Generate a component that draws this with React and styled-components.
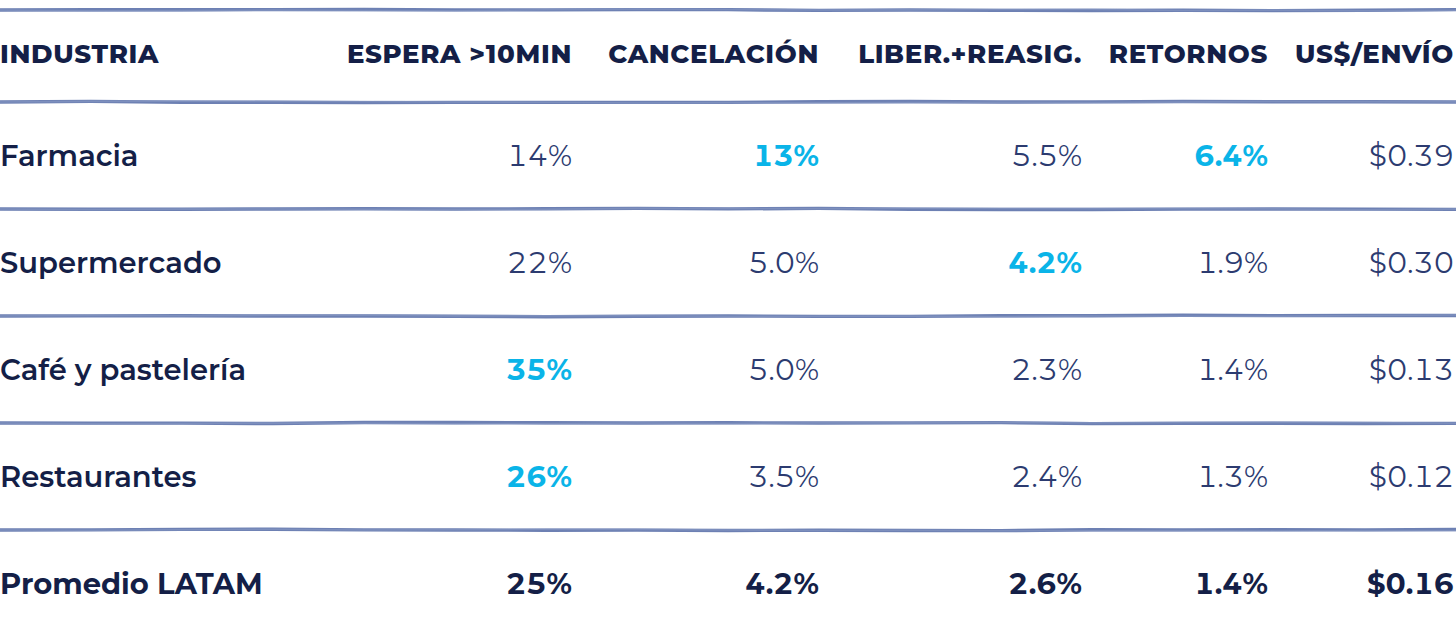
import React from "react";
import styled, { createGlobalStyle } from "styled-components";

const GlobalStyle = createGlobalStyle`
  html, body {
    margin: 0;
    padding: 0;
    background: #ffffff;
    overflow: hidden;
  }
  body {
    font-family: "Montserrat", "DejaVu Sans", "Noto Sans", sans-serif;
  }
`;

const COLS = "340px 232px 247px 263px 186px 186px";

const Table = styled.div`
  width: 1454px;
  padding-top: 8px;
  display: flex;
  flex-direction: column;
`;

const Row = styled.div`
  display: grid;
  grid-template-columns: ${COLS};
  align-items: center;
  height: ${(p) => (p.header ? "88px" : "103px")};
  padding-bottom: ${(p) => (p.header ? "4px" : "0")};
  box-sizing: border-box;
`;

const HeadCell = styled.div`
  font-size: 26px;
  font-weight: 800;
  color: #141f47;
  text-transform: uppercase;
  text-align: ${(p) => (p.first ? "left" : "right")};
  white-space: nowrap;
  letter-spacing: 0.65px;
`;

const NameCell = styled.div`
  font-size: 29px;
  font-weight: ${(p) => (p.total ? 700 : 600)};
  color: #141f47;
  white-space: nowrap;
  margin-top: -1px;
`;

const ValueCell = styled.div`
  font-size: 29px;
  text-align: right;
  white-space: nowrap;
  margin-top: -1px;
  font-variant-numeric: tabular-nums;
  font-weight: ${(p) => (p.hi || p.total ? 700 : 400)};
  color: ${(p) => (p.hi ? "#0ab4e8" : p.total ? "#141f47" : "#2c3b70")};
`;

const RuleSvg = styled.svg`
  display: block;
  width: 1456px;
  height: 6px;
  margin: -1px 0;
`;

function Rule({ seed = 0 }) {
  const w = (i) => ((Math.sin(i * 12.9898 + seed * 78.233) * 43758.5453) % 1);
  let d = "M0 3";
  let d2 = "M0 3";
  for (let i = 1; i <= 16; i++) {
    const x = (i * 1456) / 16;
    d += ` L${x.toFixed(1)} ${(3 + w(i) * 0.7).toFixed(2)}`;
    d2 += ` L${x.toFixed(1)} ${(3 + w(i + 40) * 1.0).toFixed(2)}`;
  }
  return (
    <RuleSvg viewBox="0 0 1456 6" preserveAspectRatio="none">
      <path d={d} stroke="#6d80b3" strokeWidth="3.4" fill="none" strokeLinecap="round" />
      <path d={d2} stroke="#8595c2" strokeWidth="1.6" fill="none" opacity="0.7" />
    </RuleSvg>
  );
}

const headers = [
  "Industria",
  "Espera >10min",
  "Cancelación",
  "Liber.+Reasig.",
  "Retornos",
  "US$/Envío",
];

const rows = [
  { name: "Farmacia", vals: ["14%", "13%", "5.5%", "6.4%", "$0.39"], hi: [1, 3] },
  { name: "Supermercado", vals: ["22%", "5.0%", "4.2%", "1.9%", "$0.30"], hi: [2] },
  { name: "Café y pastelería", vals: ["35%", "5.0%", "2.3%", "1.4%", "$0.13"], hi: [0] },
  { name: "Restaurantes", vals: ["26%", "3.5%", "2.4%", "1.3%", "$0.12"], hi: [0] },
];

const total = { name: "Promedio LATAM", vals: ["25%", "4.2%", "2.6%", "1.4%", "$0.16"] };

export default function App() {
  return (
    <>
      <GlobalStyle />
      <Table>
        <Rule seed={1} />
        <Row header>
          {headers.map((h, i) => (
            <HeadCell key={h} first={i === 0}>
              {h}
            </HeadCell>
          ))}
        </Row>
        <Rule seed={2} />
        {rows.map((r, ri) => (
          <React.Fragment key={r.name}>
            <Row>
              <NameCell>{r.name}</NameCell>
              {r.vals.map((v, i) => (
                <ValueCell key={i} hi={r.hi.includes(i)}>
                  {v}
                </ValueCell>
              ))}
            </Row>
            <Rule seed={ri + 3} />
          </React.Fragment>
        ))}
        <Row>
          <NameCell total>{total.name}</NameCell>
          {total.vals.map((v, i) => (
            <ValueCell key={i} total>
              {v}
            </ValueCell>
          ))}
        </Row>
      </Table>
    </>
  );
}
